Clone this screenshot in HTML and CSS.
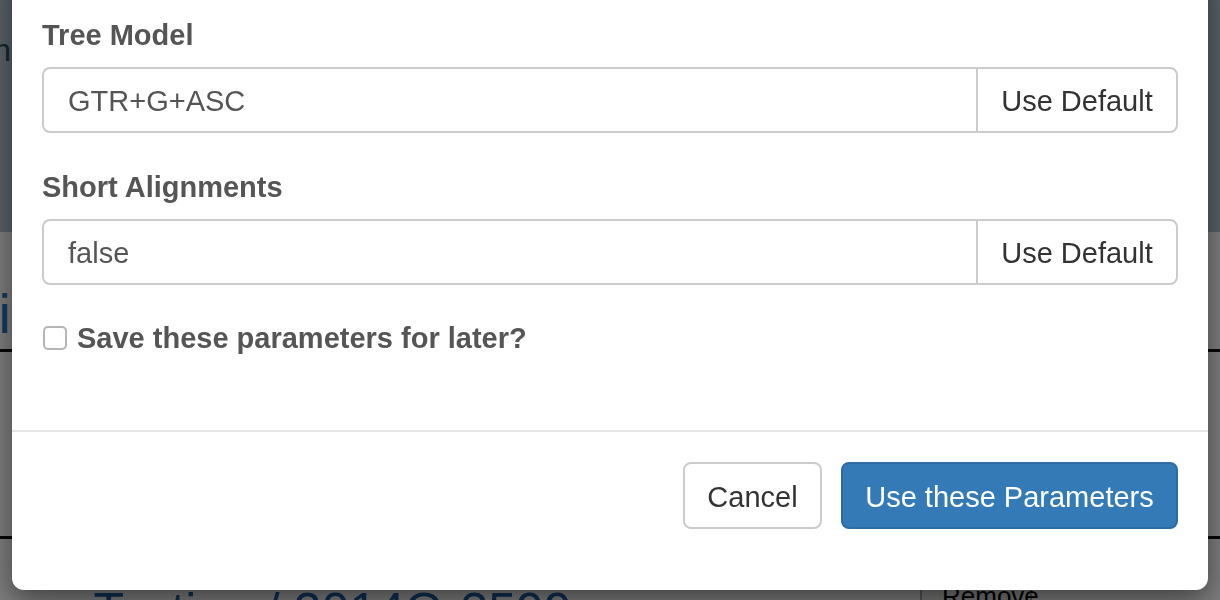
FILE: index.html
```html
<!DOCTYPE html>
<html lang="en">
<head>
<meta charset="utf-8">
<title>Parameters</title>
<link rel="stylesheet" href="styles.css">
</head>
<body>
<div class="page">
  <header class="page-header">
    <div class="edge-text nav-text">Navigation</div>
  </header>
  <section class="page-section">
    <div class="edge-text section-title">Analysis Multi</div>
  </section>
  <section class="page-section second">
    <div class="job-row">
      <div class="job-title">Happy Testing / 2014Q-3599</div>
      <button class="remove-btn" type="button">Remove</button>
    </div>
  </section>
</div>

<div class="backdrop"></div>

<div class="modal" role="dialog">
  <div class="modal-body">
    <div class="form-group">
      <label class="control-label">Tree Model</label>
      <div class="input-group">
        <input class="form-control" type="text" value="GTR+G+ASC">
        <button class="btn btn-default addon" type="button">Use Default</button>
      </div>
    </div>
    <div class="form-group">
      <label class="control-label">Short Alignments</label>
      <div class="input-group">
        <input class="form-control" type="text" value="false">
        <button class="btn btn-default addon" type="button">Use Default</button>
      </div>
    </div>
    <label class="checkbox-row">
      <input type="checkbox" class="check">
      <span>Save these parameters for later?</span>
    </label>
  </div>
  <div class="modal-footer">
    <button class="btn btn-default btn-cancel" type="button">Cancel</button>
    <button class="btn btn-primary" type="button">Use these Parameters</button>
  </div>
</div>
</body>
</html>
```
FILE: styles.css
```css
* { box-sizing: border-box; }

html, body {
  margin: 0;
  padding: 0;
  height: 100%;
  overflow: hidden;
}

body {
  background: #ffffff;
  font-family: "Liberation Sans", Arial, Helvetica, sans-serif;
  font-size: 28px;
  color: #333333;
}

/* ---------- page behind the dialog ---------- */
.page {
  display: flex;
  flex-direction: column;
}

.page-header {
  height: 232px;
  background: #b3c6d3;
  padding-top: 30px;
}

.edge-text {
  width: 11px;
  display: flex;
  justify-content: flex-end;
  white-space: nowrap;
}

.nav-text {
  font-size: 32px;
  color: #2c4a55;
  line-height: 40px;
}

.page-section {
  padding-top: 52px;
  border-bottom: 3px solid #111;
  height: 120px;
}

.section-title {
  font-size: 56px;
  line-height: 60px;
  color: #2e74c0;
}

.page-section.second {
  border-bottom: 0;
  height: auto;
  padding-top: 184px;
}

.job-row {
  display: flex;
  align-items: flex-start;
  padding-top: 42px;
  border-top: 3px solid #111;
}

.job-title {
  font-size: 50px;
  line-height: 60px;
  color: #1e5fa8;
  margin-left: -64px;
  width: 984px;
}

.remove-btn {
  font-family: inherit;
  font-size: 26px;
  background: #f0f0f0;
  border: 2px solid #aaa;
  padding: 6px 20px;
  margin-top: -8px;
  width: 112px;
}

.backdrop {
  position: fixed;
  inset: 0;
  background: rgba(0, 0, 0, 0.5);
}

/* ---------- dialog ---------- */
.modal {
  position: absolute;
  top: -30px;
  left: 12px;
  width: 1196px;
  background: #ffffff;
  border-radius: 0 0 12px 12px;
  box-shadow: 0 10px 30px rgba(0, 0, 0, 0.5);
  font-size: 29px;
}

.modal-body {
  padding: 45px 30px 72px;
  display: flex;
  flex-direction: column;
}

.form-group {
  display: flex;
  flex-direction: column;
  margin-bottom: 34px;
}

.form-group + .form-group {
  margin-bottom: 33px;
}

.control-label {
  font-weight: bold;
  color: #555555;
  line-height: 40px;
  margin-bottom: 12px;
}

.input-group {
  display: flex;
  height: 66px;
}

.form-control {
  flex: 1;
  min-width: 0;
  height: 66px;
  border: 2px solid #cccccc;
  border-right: 0;
  border-radius: 8px 0 0 8px;
  padding: 2px 24px 0;
  font-family: inherit;
  font-size: 29px;
  color: #555555;
  background: #ffffff;
  outline: none;
}

.btn {
  font-family: inherit;
  font-size: 29px;
  line-height: 40px;
  border: 2px solid #cccccc;
  border-radius: 8px;
  padding: 2px 0 0;
  text-align: center;
  cursor: pointer;
  background: #ffffff;
  color: #333333;
}

.btn.addon {
  width: 202px;
  height: 66px;
  border-radius: 0 8px 8px 0;
}

.checkbox-row {
  display: flex;
  align-items: center;
  gap: 10px;
  line-height: 40px;
  font-weight: bold;
  color: #555555;
  padding-left: 1px;
}

.check {
  appearance: none;
  -webkit-appearance: none;
  margin: 0;
  width: 24px;
  height: 24px;
  border: 2px solid #b5b5b5;
  border-radius: 5px;
  background: #ffffff;
  flex: none;
}

.modal-footer {
  border-top: 2px solid #e5e5e5;
  padding: 30px 30px 61px;
  display: flex;
  justify-content: flex-end;
  gap: 19px;
}

.modal-footer .btn {
  height: 67px;
}

.btn-cancel {
  width: 139px;
}

.btn-primary {
  width: 337px;
  background: #337ab7;
  border-color: #2e6da4;
  color: #ffffff;
}
```
